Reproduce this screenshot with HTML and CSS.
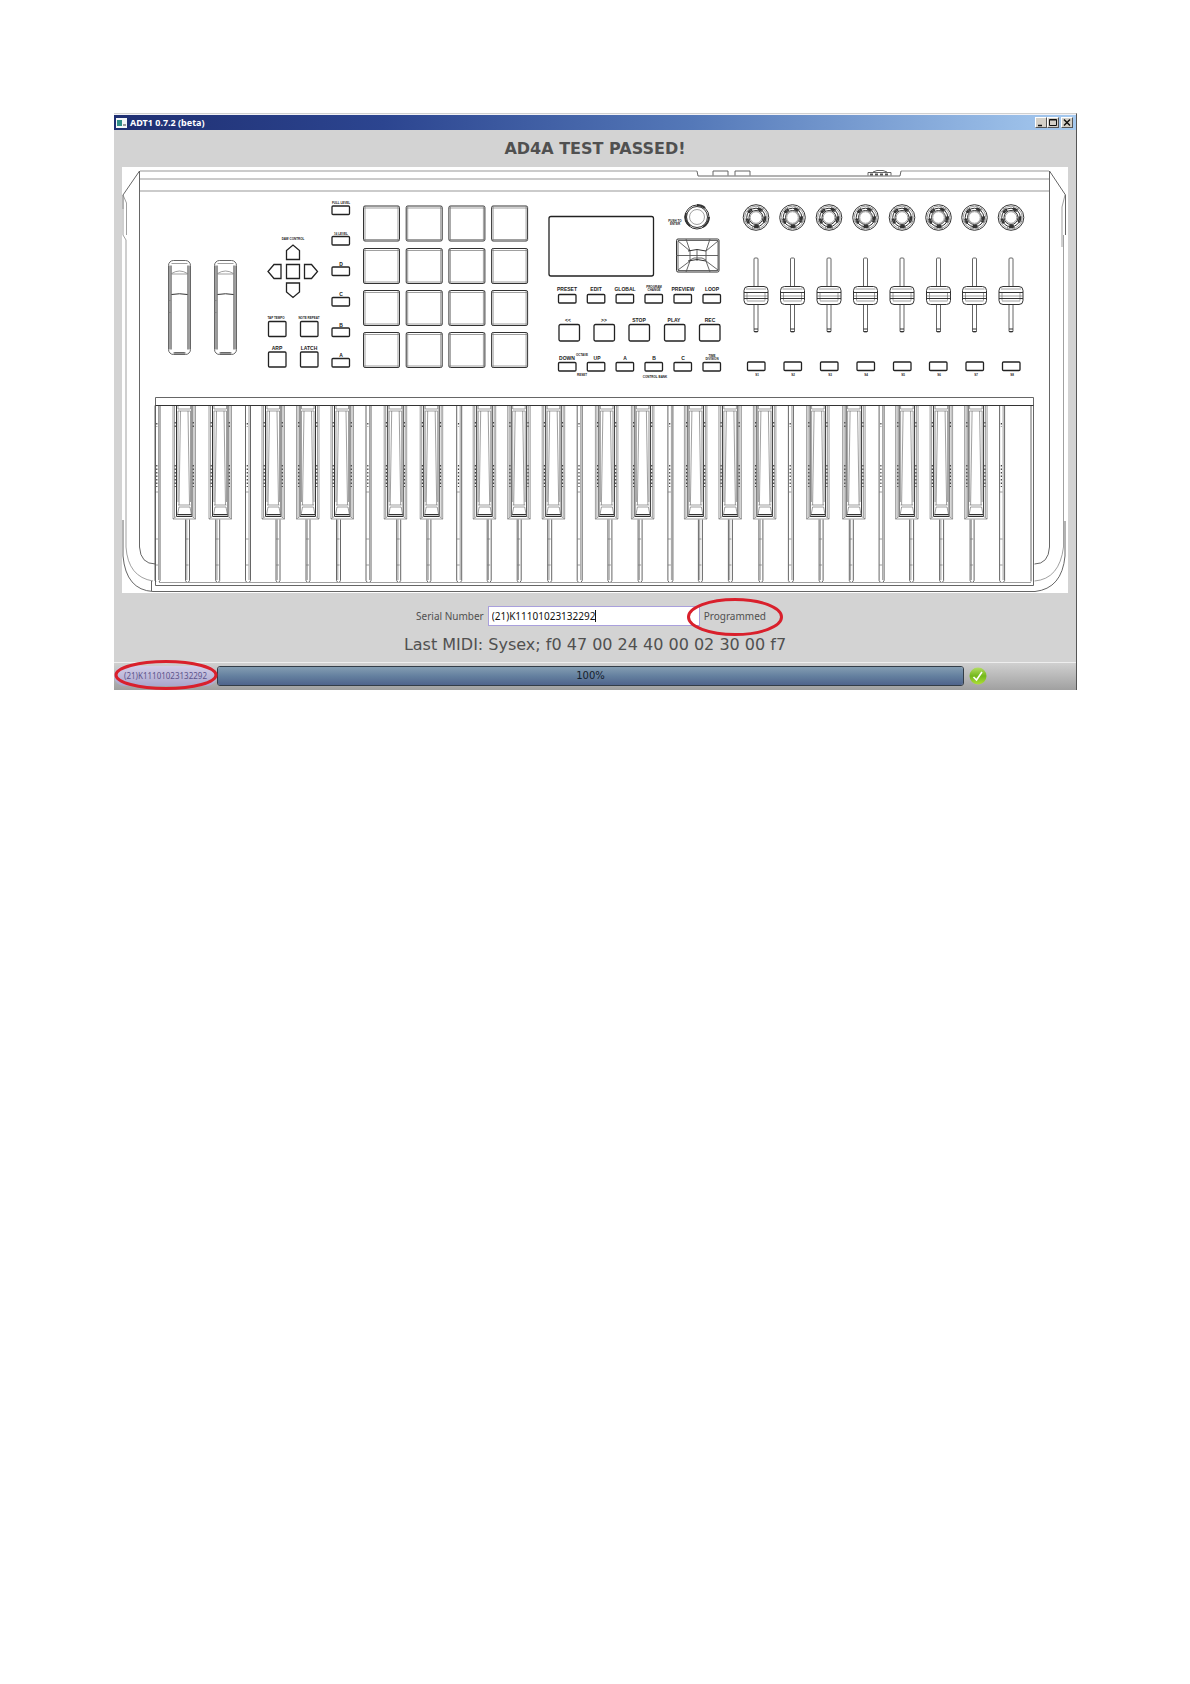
FILE: index.html
```html
<!DOCTYPE html>
<html lang="en">
<head>
<meta charset="utf-8">
<title>ADT1 0.7.2 (beta)</title>
<link rel="stylesheet" href="styles.css">
</head>
<body>
<main class="window">
  <header class="titlebar">
    <svg class="app-icon" viewBox="0 0 11 10" aria-hidden="true"><rect width="11" height="10" fill="#f4f8f8"/><rect x="1" y="2" width="5" height="6" fill="#2f8f87"/><rect x="7" y="6" width="3" height="2" fill="#999"/></svg>
    <span class="caption">ADT1 0.7.2 (beta)</span>
    <button class="win-btn" type="button" aria-label="Minimize"><svg viewBox="0 0 10 9"><path d="M2 7.500h4" stroke="#111" stroke-width="1.500"/></svg></button>
    <button class="win-btn" type="button" aria-label="Maximize"><svg viewBox="0 0 10 9"><path d="M1.500 1.500h7v6h-7zM1.500 2h7" fill="none" stroke="#111"/></svg></button>
    <button class="win-btn close" type="button" aria-label="Close"><svg viewBox="0 0 10 9"><path d="M2 1.500l6 6m0-6l-6 6" stroke="#111" stroke-width="1.500"/></svg></button>
  </header>

  <h1 class="result">AD4A TEST PASSED!</h1>

  <svg class="keyboard" viewBox="122 167 946 426" role="img" aria-label="Keyboard controller layout">
    <defs>
      <g id="btn"><rect width="17.5" height="8.5" rx="1"/></g>
      <g id="sq"><rect width="17.5" height="15" rx="1"/></g>
      <g id="play"><rect width="20.5" height="16.5" rx="1.5"/></g>
      <g id="pad"><rect width="36" height="35" rx="1.5"/><path class="thin" d="M1.5 0v35M34.5 0v35M0 2h36M0 33.5h36"/></g>
      <g id="padrow"><use href="#pad"/><use href="#pad" x="42.7"/><use href="#pad" x="85.4"/><use href="#pad" x="128.1"/></g>
      <g id="wheel">
        <rect class="mid" width="22" height="94" rx="5"/>
        <path d="M2.5 5v84M19.5 5v84"/>
        <path class="thin" d="M1 5v84M21 5v84M3 13q8-5 16 0M3 3h16M3 13.500h16M6 92h10M0 40h2M0 52h2"/>
        <path d="M3 34q8-1.500 16 0M5 92.500h12"/>
      </g>
      <g id="knob">
        <circle r="12.8"/><circle class="thin" r="11.300"/><circle r="9.300"/><circle r="7"/><circle class="thin" r="5.800"/>
        <circle class="grip" r="9"/><path class="thin" d="M-8-10l3 4M8-10l-3 4M-12 5l4-2M12 5l-4-2M-4 12l1-4M4 12l-1-4"/>
      </g>
      <g id="fader">
        <rect class="mid" x="-2" width="4" height="74" rx="1"/><path d="M-2 71h4M-2 73.500h4"/>
        <rect class="cap" x="-12" y="28.500" width="24" height="18" rx="4"/>
        <path class="thin" d="M-10 31h20M-12 38h24M-9 40.500h18M-9 43h18M-9 34.500v8M9 34.500v8"/>
        <path d="M-12 34.500h24M-12 40.500h24"/>
      </g>
      <g id="gap">
        <path class="mid" d="M-2.500 405.500v175l1 1.500M2.500 405.500v175l-1 1.500"/><path class="thin" d="M1 406v174"/>
        <path class="marks" d="M-.7 423v4M-.7 465v22"/>
        <path class="thin" d="M-2.500 492h3M-2.500 539h3M-2.500 565h3"/>
      </g>
      <g id="halfgap">
        <path class="mid" d="M-2 518v62.500l1 1.500M2 518v62.500l-1 1.500"/><path class="thin" d="M-.7 518v62M-2 539h3M-2 565h3"/>
      </g>
      <g id="black">
        <path class="white" d="M0 405.500h22.500v114H0z"/>
        <path class="thin" d="M0 405.500v113.500h22.500v-113.500M1.500 406v111.500M21 406v111.500"/>
        <path d="M3.500 405.500v111h15.500v-111"/>
        <path class="thin" d="M5 406v3h12.500v-3M5 411h12.500M5 411v91M17.500 411v91M7.500 411l-1.500 94M15 411l1.500 94M5 505h12.500M6 507l-1.500 8h14l-1.500-8zM0 519l4-3M22.500 519l-4-3"/>
        <path d="M4.500 514.500h14"/>
        <path class="marks" d="M2.200 422v5M2.200 465v22M20.300 422v5M20.300 465v22"/>
      </g>
      <g id="octave">
        <use href="#halfgap" x="187.500"/><use href="#halfgap" x="217.700"/><use href="#gap" x="248"/>
        <use href="#halfgap" x="278"/><use href="#halfgap" x="308"/><use href="#halfgap" x="338.500"/><use href="#gap" x="368.500"/>
        <use href="#black" x="173"/><use href="#black" x="209"/><use href="#black" x="262"/><use href="#black" x="296.500"/><use href="#black" x="331"/>
      </g>
    </defs>
    <rect class="paper" x="122" y="167" width="946" height="426"/>

    <g class="body">
      <path class="pale" d="M140 171H697M901 171h148M140 179h909M140 191h909"/>
      <path d="M139.500 171L123 195v14M139.500 171V547q1 17 16 17M1049.500 171l16 24v40M1049.500 171V547q-1 17-15 17"/>
      <path class="thin" d="M123 209v26l3 5v307q2 30 27 34M123 195l3.500 8v32M1065 195l-3 12v40M1063.500 235V547q-4 32-29 34"/>
      <path d="M123 520v36q3 34 30 35.500h882q27-3 30-35.500v-35M151.500 581v10"/>
      <path d="M697 171l1 5h202l1-5M713 175.500v-4.500h15v4.500M735 175.500v-4.500h15v4.500M868 175.500v-3h23v3M873 172l4-1.500h6l4 1.500"/>
      <path d="M870 174.500h18" stroke-dasharray="3 2" stroke-width="2"/>
    </g>

    <use href="#wheel" x="168.500" y="260.500"/><use href="#wheel" x="214.500" y="260.500"/>

    <g class="heavy">
      <path d="M286.500 259.500v-9l6.500-5.500 6.500 5.500v9zM286.500 283v9l6.500 5.500 6.500-5.500v-9zM281 264.500v14h-7l-6-7 6-7zM304.500 264.500v14h7l6-7-6-7zM286.500 264.500h13v14h-13z"/>
      <use href="#sq" x="268.500" y="321.500"/><use href="#sq" x="300.500" y="321.500"/>
      <use href="#sq" x="268.500" y="352"/><use href="#sq" x="300.500" y="352"/>
      <use href="#btn" x="332" y="206"/><use href="#btn" x="332" y="236.500"/><use href="#btn" x="332" y="267"/>
      <use href="#btn" x="332" y="297.500"/><use href="#btn" x="332" y="328"/><use href="#btn" x="332" y="358.500"/>
      <rect x="549" y="216.500" width="104.500" height="59.500" rx="2"/>
      <use href="#btn" x="558.500" y="294.500"/><use href="#btn" x="587.300" y="294.500"/><use href="#btn" x="616.100" y="294.500"/>
      <use href="#btn" x="645" y="294.500"/><use href="#btn" x="674" y="294.500"/><use href="#btn" x="703" y="294.500"/>
      <use href="#play" x="559" y="324.500"/><use href="#play" x="594" y="324.500"/><use href="#play" x="629" y="324.500"/>
      <use href="#play" x="664.500" y="324.500"/><use href="#play" x="699.500" y="324.500"/>
      <use href="#btn" x="558.500" y="362.500"/><use href="#btn" x="587.300" y="362.500"/><use href="#btn" x="616.100" y="362.500"/>
      <use href="#btn" x="645" y="362.500"/><use href="#btn" x="674" y="362.500"/><use href="#btn" x="703" y="362.500"/>
      <use href="#btn" x="747.500" y="362"/><use href="#btn" x="784" y="362"/><use href="#btn" x="820.500" y="362"/><use href="#btn" x="857" y="362"/>
      <use href="#btn" x="893.500" y="362"/><use href="#btn" x="929.500" y="362"/><use href="#btn" x="966" y="362"/><use href="#btn" x="1002.500" y="362"/>
    </g>

    <use href="#padrow" x="363.500" y="206"/><use href="#padrow" x="363.500" y="248.500"/>
    <use href="#padrow" x="363.500" y="290.500"/><use href="#padrow" x="363.500" y="332.500"/>

    <g>
      <circle cx="697" cy="217" r="12"/><circle cx="697" cy="217" r="10.500"/><circle class="thin" cx="697" cy="217" r="7.500"/>
      <path d="M697 205a12 12 0 0 1 8 3M709 217a12 12 0 0 1-6 10M686 213a12 12 0 0 0 4 13" stroke-width="2"/>
      <rect x="676.500" y="239" width="42.500" height="33" rx="1.500"/>
      <path class="mid" d="M678 240.500h40v30h-40zM686 239l4 12v10l-4 11M710 239l-4 12v10l4 11M678 241l12 10M718 241l-12 10M678 270l12-9M718 270l-12-9M676 255.500h42M697 250v11M690 260l4-2h8l4 2"/>
      <path d="M688 251q9-3 18 0M688 261q9-3 18 0" />
    </g>

    <use href="#knob" x="756" y="217.500"/><use href="#knob" x="792.500" y="217.500"/><use href="#knob" x="829" y="217.500"/><use href="#knob" x="865.500" y="217.500"/>
    <use href="#knob" x="902" y="217.500"/><use href="#knob" x="938.500" y="217.500"/><use href="#knob" x="974.500" y="217.500"/><use href="#knob" x="1011" y="217.500"/>
    <use href="#fader" x="756" y="258"/><use href="#fader" x="792.500" y="258"/><use href="#fader" x="829" y="258"/><use href="#fader" x="865.500" y="258"/>
    <use href="#fader" x="902" y="258"/><use href="#fader" x="938.500" y="258"/><use href="#fader" x="974.500" y="258"/><use href="#fader" x="1011" y="258"/>

    <g class="keys">
      <use href="#octave"/><use href="#octave" x="211.200"/><use href="#octave" x="422.400"/><use href="#octave" x="633.600"/>
      <use href="#gap" x="157.500"/>
      <path class="thin" d="M159 582.500H1031"/>
      <path class="mid" d="M155.500 397.500V585.500H1033.500V397.500zM1031 405.500v176"/>
      <path d="M155.500 405.500H1033.500"/>
    </g>

    <g class="print">
      <text x="293" y="239.500" class="tiny">DAW CONTROL</text>
      <text x="276" y="319" class="mini">TAP TEMPO</text><text x="309" y="319" class="mini">NOTE REPEAT</text>
      <text x="277" y="350">ARP</text><text x="309" y="350">LATCH</text>
      <text x="341" y="204" class="mini">FULL LEVEL</text><text x="341" y="235" class="mini">16 LEVEL</text>
      <text x="341" y="266">D</text><text x="341" y="296">C</text><text x="341" y="327">B</text><text x="341" y="357">A</text>
      <text x="567" y="291">PRESET</text><text x="596" y="291">EDIT</text><text x="625" y="291">GLOBAL</text>
      <text x="654" y="288" class="mini">PROGRAM</text><text x="654" y="291" class="mini">CHANGE</text>
      <text x="683" y="291">PREVIEW</text><text x="712" y="291">LOOP</text>
      <text x="568" y="322">&lt;&lt;</text><text x="604" y="322">&gt;&gt;</text><text x="639" y="322">STOP</text><text x="674" y="322">PLAY</text><text x="710" y="322">REC</text>
      <text x="567" y="360">DOWN</text><text x="582" y="356" class="mini">OCTAVE</text><text x="597" y="360">UP</text><text x="582" y="376" class="mini">RESET</text>
      <text x="625" y="360">A</text><text x="654" y="360">B</text><text x="683" y="360">C</text>
      <text x="712" y="357" class="mini">TIME</text><text x="712" y="360" class="mini">DIVISION</text>
      <text x="655" y="378" class="tiny">CONTROL BANK</text>
      <text x="675" y="222" class="mini">PUSH TO</text><text x="675" y="225" class="mini">ENTER</text>
      <text x="757" y="376" class="tiny">S1</text><text x="793" y="376" class="tiny">S2</text><text x="830" y="376" class="tiny">S3</text><text x="866" y="376" class="tiny">S4</text>
      <text x="903" y="376" class="tiny">S5</text><text x="939" y="376" class="tiny">S6</text><text x="976" y="376" class="tiny">S7</text><text x="1012" y="376" class="tiny">S8</text>
    </g>
  </svg>

  <form class="serial-row">
    <label for="serial">Serial Number</label>
    <span class="field"><input id="serial" type="text" value="(21)K11101023132292"></span>
    <span class="programmed">Programmed
      <svg class="ring ring-programmed" viewBox="0 0 98 40" preserveAspectRatio="none" aria-hidden="true"><ellipse cx="49" cy="20" rx="46.500" ry="17.500"/></svg>
    </span>
  </form>

  <p class="midi">Last MIDI: Sysex; f0 47 00 24 40 00 02 30 00 f7</p>

  <footer class="status">
    <span class="unit">(21)K11101023132292
      <svg class="ring ring-unit" viewBox="0 0 104 30" preserveAspectRatio="none" aria-hidden="true"><ellipse cx="52" cy="15" rx="50" ry="13.500"/></svg>
    </span>
    <div class="meter">
      <progress id="done" value="100" max="100"></progress>
      <label for="done">100%</label>
    </div>
    <svg class="ok" viewBox="0 0 18 18" role="img" aria-label="Passed">
      <defs><linearGradient id="green" x2="0" y2="1"><stop stop-color="#b4de62"/><stop offset=".5" stop-color="#74b81c"/><stop offset="1" stop-color="#aee035"/></linearGradient></defs>
      <circle cx="9" cy="9" r="8.500" fill="url(#green)"/><path d="M4.500 10l3 3 5.500-8" fill="none" stroke="#fff" stroke-width="1.600"/>
    </svg>
  </footer>
</main>
</body>
</html>
```
FILE: styles.css
```css
* { box-sizing: border-box; }
body {
  margin: 0;
  padding: 113px 113px 40px 114px;
  background: #fff;
  color: #505050;
  font-family: "DejaVu Sans", Verdana, sans-serif;
}
.window {
  background: #d3d3d3;
  border-top: 1px solid #d0d0d0;
  border-right: 1px solid #555;
}
.titlebar {
  display: flex;
  align-items: center;
  height: 16px;
  padding: 0 3px 0 2px;
  border-top: 1px solid #f2f2f6;
  background: linear-gradient(90deg, #1f2f72, #2c4590 28%, #5478b8 60%, #a6caf0);
}
.app-icon { width: 11px; height: 10px; }
.caption {
  flex: 1;
  margin-left: 3px;
  color: #fff;
  font: bold 9px/14px "Noto Sans", sans-serif;
}
.win-btn {
  width: 12px;
  height: 11px;
  padding: 0;
  border: 1px solid;
  border-color: #fff #555 #555 #fff;
  background: #d4d0c8;
}
.win-btn svg { display: block; width: 100%; height: 100%; }
.close { margin-left: 2px; }
.result {
  margin: 0;
  font-size: 16px;
  line-height: 37px;
  text-align: center;
}
.keyboard {
  display: block;
  width: calc(100% - 16px);
  margin-left: 8px;
  fill: none;
  stroke: #333;
  stroke-width: 1;
}
.paper { fill: #fff; stroke: none; }
.white { fill: #fff; stroke: none; }
.thin { stroke: #777; stroke-width: .7; }
.mid { stroke: #555; stroke-width: .9; }
.pale { stroke: #bbb; stroke-width: 1.5; }
.heavy { stroke: #222; stroke-width: 1.3; }
.cap { fill: #fff; }
.body { stroke: #555; stroke-width: .9; }
.grip { stroke: #333; stroke-width: 3; stroke-dasharray: 5 6; }
.marks { stroke: #444; stroke-width: 1.2; stroke-dasharray: 1.5 2; }
.print {
  fill: #222;
  stroke: none;
  font-family: "Liberation Sans", Arial, sans-serif;
  font-size: 5px;
  font-weight: bold;
  text-anchor: middle;
}
.print .mini,
.print .tiny { font-size: 3px; }
.serial-row {
  display: flex;
  justify-content: center;
  align-items: center;
  gap: 4px;
  padding: 13px 8px 0 0;
  font: 10px/20px "Noto Sans", sans-serif;
}
.field { width: 212px; }
.field input {
  display: block;
  width: 100%;
  height: 20px;
  padding: 0 3px;
  border: 1px solid #a9a0dc;
  background: linear-gradient(#111, #111) 106px 3px / 1px 12px no-repeat #fff;
  color: #111;
  font: 10px "Noto Sans", sans-serif;
}
.programmed { position: relative; }
.ring {
  position: absolute;
  fill: none;
  stroke: #d9202c;
  stroke-width: 3;
}
.ring-programmed { left: -18px; top: -9px; width: 98px; height: 40px; }
.midi {
  margin: 0;
  padding: 7px 0 5px;
  font-size: 16px;
  line-height: 24px;
  text-align: center;
}
.status {
  display: flex;
  align-items: center;
  height: 28px;
  padding-bottom: 2px;
  border-top: 1px solid #eee;
  background: linear-gradient(#d0d0d0, #a0a0a0);
}
.unit {
  position: relative;
  width: 103px;
  height: 20px;
  padding-left: 10px;
  border-radius: 10px;
  background: linear-gradient(#d2cee8, #aaa6cc);
  color: #5c548c;
  font: 8px/20px "Noto Sans", sans-serif;
}
.ring-unit { left: 0; top: -6px; width: 104px; height: 30px; }
.meter { display: grid; flex: 1; }
.meter > * { grid-area: 1 / 1; }
.meter progress {
  width: 100%;
  height: 20px;
  appearance: none;
  border: 1px solid #333d48;
  border-radius: 3px;
  overflow: hidden;
}
.meter progress::-webkit-progress-bar { background: #ccc; }
.meter progress::-webkit-progress-value { background: linear-gradient(#849db2, #64809f 50%, #50648c); }
.meter label {
  z-index: 1;
  color: #15202b;
  font-size: 10px;
  line-height: 20px;
  text-align: center;
}
.ok { width: 18px; height: 18px; margin: 0 89px 0 5px; }
```
